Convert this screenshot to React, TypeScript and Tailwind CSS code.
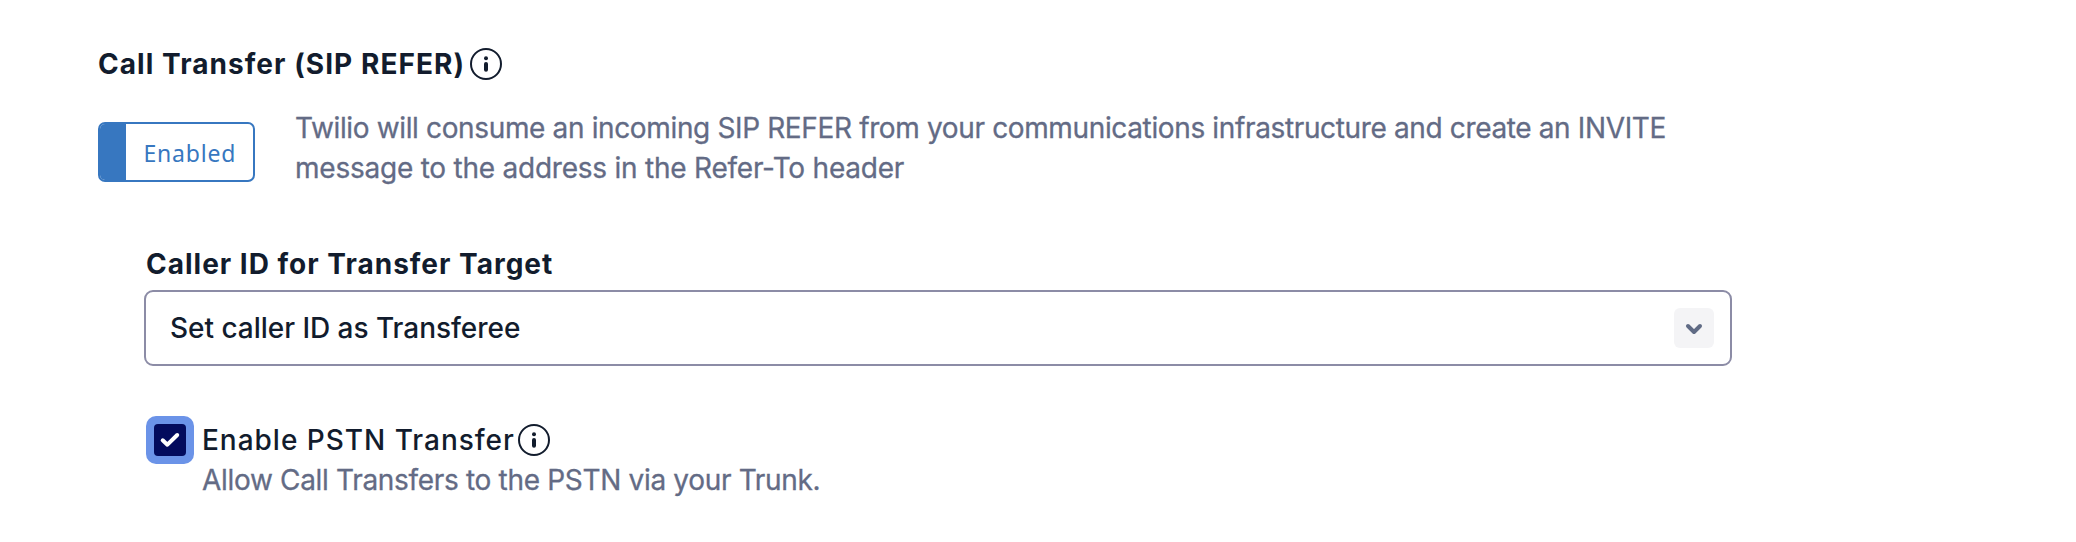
function InfoIcon() {
  return (
    <svg className="size-8 shrink-0" viewBox="0 0 32 32" fill="none" aria-hidden="true">
      <circle cx="16" cy="16" r="15" stroke="#121c2d" strokeWidth="2" />
      <circle cx="16" cy="10.2" r="2" fill="#121c2d" />
      <path d="M16 16v5.8" stroke="#121c2d" strokeWidth="4" strokeLinecap="round" />
    </svg>
  );
}

export default function App() {
  return (
    <main className="h-[542px] w-[2076px] bg-white pt-11 pl-[98px] font-['Inter',sans-serif] text-[28px] leading-10 text-[#121c2d]">
      <h2 className="flex h-10 items-center gap-[7px] font-bold">
        <span className="w-[365px] tracking-[1.05px] whitespace-nowrap">Call Transfer (SIP REFER)</span>
        <InfoIcon />
      </h2>

      <div className="mt-6 flex items-start">
        <button className="mt-3.5 flex h-[60px] w-[157px] overflow-hidden rounded-[7px] border-2 border-[#3777c0] font-['Noto_Sans',sans-serif] text-[23px] text-[#3777c0]">
          <span className="h-full w-[26px] shrink-0 bg-[#3777c0]" />
          <span className="pt-[9px] pl-[17.5px] tracking-[0.8px]">Enabled</span>
        </button>
        <p className="ml-10 whitespace-nowrap text-[#636b85] [-webkit-text-stroke:0.3px]">
          <span className="block tracking-[-0.36px]">
            Twilio will consume an incoming SIP REFER from your communications infrastructure and create an INVITE
          </span>
          <span className="block tracking-[-0.23px]">message to the address in the Refer-To header</span>
        </p>
      </div>

      <section className="mt-14 ml-[46px] w-[1588px]">
        <div className="ml-0.5 flex h-[46px] items-start font-bold">
          <span className="tracking-[1px]">Caller ID for Transfer Target</span>
        </div>
        <button className="flex h-[76px] w-full items-center justify-between rounded-[9px] border-2 border-[#8c8ca6] pr-4 pl-6 text-left">
          <span className="font-medium tracking-[-0.03px]">Set caller ID as Transferee</span>
          <span className="flex size-10 items-center justify-center rounded-md bg-[#f4f4f6]">
            <svg className="size-10" viewBox="0 0 40 40" fill="none" aria-hidden="true">
              <path d="M14 18l6 6 6-6" stroke="#606b85" strokeWidth="4" strokeLinecap="round" strokeLinejoin="round" />
            </svg>
          </span>
        </button>

        <div className="mt-[50px] ml-0.5 flex items-start">
          <span className="flex size-12 items-center justify-center rounded-[10px] bg-[#6b93e8]">
            <span className="flex size-8 items-center justify-center rounded bg-[#030b5d]">
              <svg className="size-8" viewBox="0 0 32 32" fill="none" aria-hidden="true">
                <path d="M8.7 16.3L13.4 20.7L23.2 11" stroke="white" strokeWidth="4" strokeLinecap="round" strokeLinejoin="round" />
              </svg>
            </span>
          </span>
          <div className="mt-1 ml-2">
            <div className="flex h-10 items-center font-medium">
              <span className="w-[316px] tracking-[0.98px] whitespace-nowrap">Enable PSTN Transfer</span>
              <InfoIcon />
            </div>
            <p className="tracking-[-0.32px] text-[#636b85] [-webkit-text-stroke:0.3px]">Allow Call Transfers to the PSTN via your Trunk.</p>
          </div>
        </div>
      </section>
    </main>
  );
}
